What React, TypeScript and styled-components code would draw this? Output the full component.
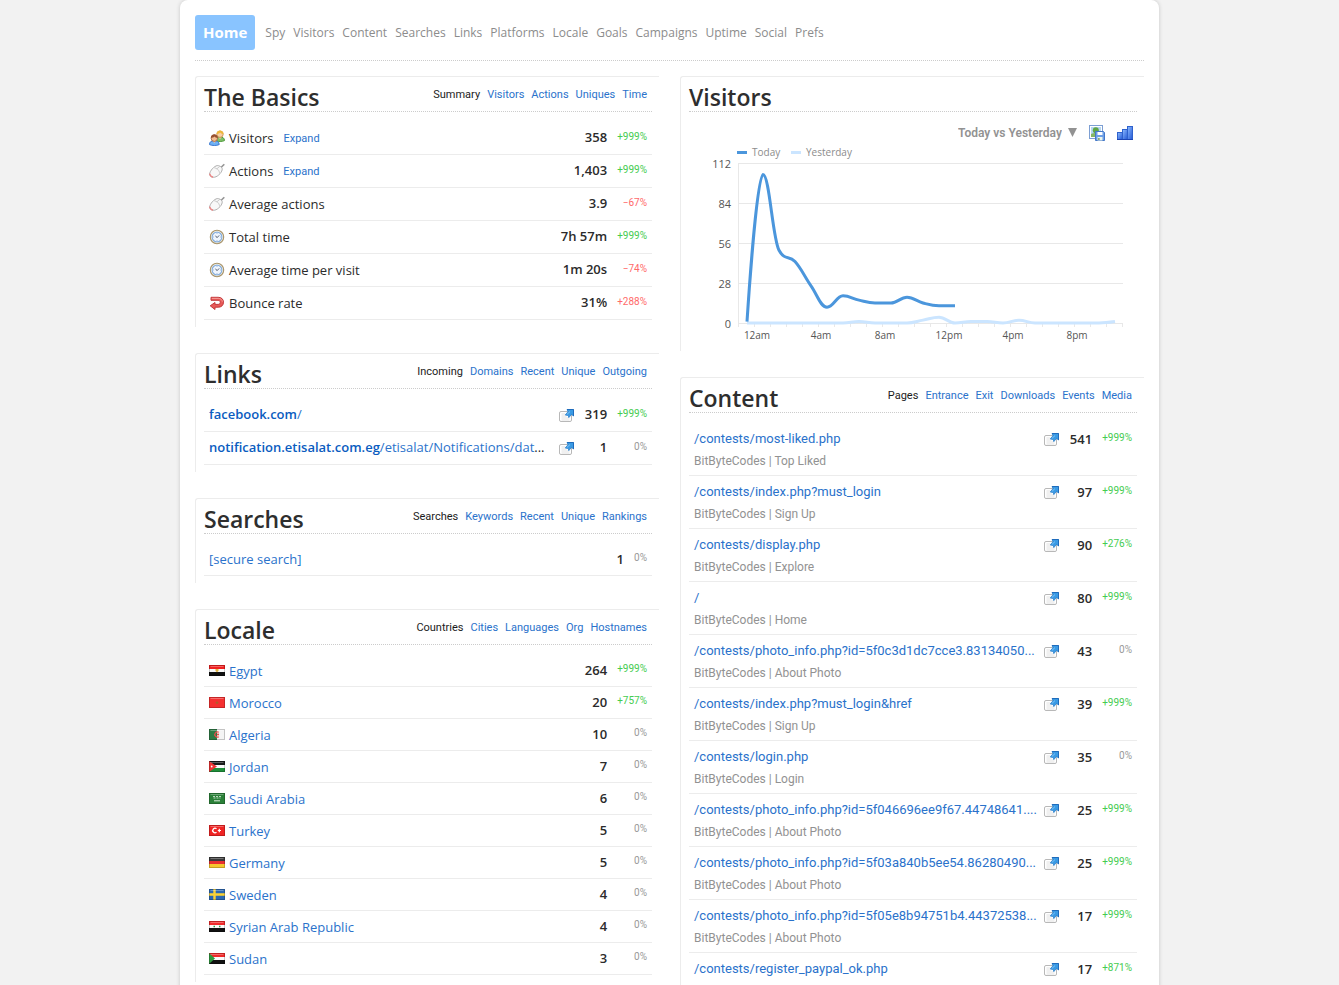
import React from "react";
import styled, { createGlobalStyle } from "styled-components";

const humanist = '"Open Sans", "Noto Sans", sans-serif';
const compact = 'Roboto, "Open Sans", sans-serif';
const linkBlue = "#2a72cb";

const GlobalStyle = createGlobalStyle`
  * { box-sizing: border-box; }
  body {
    margin: 0;
    background: #f2f2f2;
    color: #2b2b2b;
    font-family: ${humanist};
    font-size: 13px;
    line-height: 18px;
  }
  a { color: ${linkBlue}; text-decoration: none; }
  a:hover { text-decoration: underline; }
`;

/* ---------- page frame ---------- */

const Page = styled.div`
  max-width: 979px;
  min-height: 100vh;
  margin: 0 auto;
  padding: 15px 15px 0;
  background: #fff;
  border-radius: 8px 8px 0 0;
  box-shadow: 0 0 4px rgba(0, 0, 0, 0.18);
`;

const Nav = styled.nav`
  display: flex;
  flex-wrap: wrap;
  align-items: center;
  gap: 8px;
  padding-bottom: 10px;
  border-bottom: 1px dotted #ccc;
`;

const NavLink = styled.a`
  color: #8c8c8c;
  font-size: 12px;
`;

const HomeLink = styled.a`
  margin-right: 2px;
  padding: 0 8px;
  border-radius: 3px;
  background: #89c4ff;
  color: #fff;
  font-size: 15px;
  font-weight: 700;
  line-height: 35px;
`;

const Columns = styled.main`
  display: grid;
  grid-template-columns: repeat(auto-fit, minmax(min(440px, 100%), 1fr));
  column-gap: 21px;
  align-items: start;
  padding-top: 15px;
`;

const Column = styled.div`
  display: flex;
  flex-direction: column;
  gap: 26px;
  min-width: 0;
`;

/* ---------- panels ---------- */

const PanelBox = styled.section`
  padding: 0 7px 7px 8px;
  border-top: 1px solid #ececec;
  border-left: 1px solid #ececec;
  border-top-left-radius: 3px;
`;

const PanelHead = styled.header`
  display: flex;
  justify-content: space-between;
  align-items: flex-start;
  height: 35px;
  margin-bottom: 10px;
  border-bottom: 1px dotted #ccc;
`;

const PanelTitle = styled.h2`
  margin: 0;
  color: #2e2e2e;
  font-size: 23px;
  font-weight: 600;
  line-height: 40px;
`;

const Tabs = styled.nav`
  display: flex;
  gap: 7px;
  padding: 9px 5px 0 0;
  font-family: ${compact};
  font-size: 11px;
`;

const Tab = styled.a<{ $current: boolean }>`
  color: ${(p) => (p.$current ? "#1c1c1c" : linkBlue)};
`;

type PanelProps = { title: string; tabs?: string[]; children: React.ReactNode };

function Panel({ title, tabs = [], children }: PanelProps) {
  return (
    <PanelBox aria-label={title}>
      <PanelHead>
        <PanelTitle>{title}</PanelTitle>
        {tabs.length > 0 && (
          <Tabs aria-label={`${title} views`}>
            {tabs.map((t, i) => (
              <Tab key={t} href="#" $current={i === 0}>
                {t}
              </Tab>
            ))}
          </Tabs>
        )}
      </PanelHead>
      {children}
    </PanelBox>
  );
}

/* ---------- data tables ---------- */

const Table = styled.table`
  width: 100%;
  border-collapse: separate;
  border-spacing: 0;
`;

const Row = styled.tr<{ $height: number }>`
  height: ${(p) => p.$height}px;
  & > * { border-bottom: 1px solid #ececec; }
`;

const LabelCell = styled.th`
  width: 100%;
  padding: 0 0 0 5px;
  font-weight: 400;
  text-align: left;
  white-space: nowrap;
`;

const Label = styled.div`
  display: flex;
  align-items: center;
  gap: 4px;
`;

const Expand = styled.a`
  margin-left: 6px;
  padding-top: 2px;
  font-family: ${compact};
  font-size: 11px;
`;

const IconCell = styled.td`
  padding: 2px 0 0;
  line-height: 0;
`;

const ValueCell = styled.td`
  min-width: 33px;
  padding: 0 0 2px;
  font-weight: 600;
  text-align: right;
  white-space: nowrap;
`;

const PercentCell = styled.td<{ $value: string }>`
  padding: 0 5px 3px 10px;
  color: ${(p) => p.$value};
  font-family: ${compact};
  font-size: 10px;
  text-align: right;
  white-space: nowrap;
`;

const Domain = styled.b`
  color: #0a5cc0;
  font-weight: 600;
`;

const ReferrerLabel = styled.div`
  padding-bottom: 2px;
`;

const UrlText = styled.div`
  font-family: ${compact};
`;

const PageRow = styled(Row)`
  vertical-align: top;
  & > * { padding-top: 7px; }
  & > ${IconCell} { padding-top: 9px; }
  & > ${PercentCell} { padding-top: 6px; }
`;

const PageTitle = styled.div`
  margin-top: 4px;
  color: #929292;
  font-family: ${compact};
  font-size: 12px;
`;

const percentColour = (text: string, inverse = false) => {
  if (text === "0%") return "#999";
  return text.startsWith("+") !== inverse ? "#45cc50" : "#ff6a6a";
};

function Percent({ text, inverse }: { text: string; inverse?: boolean }) {
  return <PercentCell $value={percentColour(text, inverse)}>{text}</PercentCell>;
}

/* ---------- icons ---------- */

const Icon16 = styled.svg.attrs({ width: 16, height: 16, viewBox: "0 0 16 16", "aria-hidden": true })`
  flex: none;
`;

const GroupIcon = () => (
  <Icon16>
    <path d="M6.500 10.500c0-2.600 1.500-3.500 4.200-3.500 3 0 4.800 1 4.800 3.600-2.500 1.200-6 1.200-9-.1z" fill="#7fc169" stroke="#4f9a3c" />
    <path d="M9.500 7.300l1.500 2 1.500-2z" fill="#f6c99f" />
    <circle cx="11" cy="4.200" r="3.200" fill="#f8cfa4" stroke="#c08a3c" strokeWidth=".8" />
    <path d="M7.600 4c0-2.400 1.500-3.600 3.400-3.600s3.500 1.200 3.500 3.600c-1.800-.2-2.800-.8-3.400-1.600-.8 1-2 1.400-3.500 1.600z" fill="#eeb73a" />
    <path d="M.5 14.600c0-2.800 1.700-3.800 4.700-3.800s5 1 5 3.800c-2.700 1.200-7 1.200-9.700 0z" fill="#6fb1f5" stroke="#3a78cf" />
    <path d="M3.800 11l1.500 2 1.500-2z" fill="#f6c99f" />
    <circle cx="5.300" cy="8.200" r="3.200" fill="#f3bd92" stroke="#9a5a38" strokeWidth=".8" />
    <path d="M1.900 8c0-2.400 1.500-3.700 3.400-3.700s3.500 1.300 3.500 3.700c-1.700-.2-2.800-.7-3.400-1.500-.8 1-2 1.300-3.500 1.500z" fill="#97502f" />
  </Icon16>
);

const MouseIcon = () => (
  <Icon16>
    <path d="M11.500 5l3.800-3.800" stroke="#949494" strokeWidth="1.600" />
    <path d="M.6 11.200C.8 7.800 5.200 3 8.200 2.600c1.800-.2 4.600 1.200 5 3 .4 3-3.800 7.800-7.600 8.600C3 14.500.6 13.500.6 11.200z" fill="#f8f8f8" stroke="#a6a6a6" strokeWidth=".9" />
    <path d="M5.300 4.800c2.700.3 4.700 2.100 5.300 5M7.600 6l3.200-2.600" fill="none" stroke="#c0c0c0" strokeWidth=".8" />
    <path d="M.8 10.800c.5 1.600 1.600 2.700 3.200 3.300-1.900.1-3.200-1-3.200-3.300z" fill="#f58a8a" stroke="#ee8585" />
  </Icon16>
);

const ClockIcon = () => (
  <Icon16>
    <circle cx="8" cy="8" r="6.700" fill="#fdf7e6" stroke="#a8946c" strokeWidth="1.100" />
    <circle cx="8" cy="8" r="4.900" fill="#eff5fd" stroke="#86aedd" strokeWidth="1.200" />
    <path d="M8 4v.8M8 11.200v.8M4 8h.8M11.200 8h.8" stroke="#9ab4d6" />
    <path d="M6.500 6.700L8 8.700l2.200-2.300" fill="none" stroke="#5a6478" />
  </Icon16>
);

const BounceIcon = () => (
  <Icon16>
    <path
      d="M2 2.300h7.200c3.200 0 5.300 2 5.300 4.900 0 3-2.100 5-5.300 5H6v2.300L1.200 10.800 6 7.500v1.900h3c1.300 0 2.300-.8 2.300-2.100 0-1.200-1-2-2.300-2H2z"
      fill="#e85a58"
      stroke="#c23a3c"
    />
    <path d="M2.800 3.400h6.400c2.500 0 4 1.300 4.200 3.300" fill="none" stroke="#f79c98" />
  </Icon16>
);

const GoIcon = () => (
  <Icon16>
    <rect x="1.500" y="3.500" width="12" height="10" rx="1.500" fill="#fff" stroke="#b8b8b8" />
    <path d="M3.500 6h4M3.500 8h5M3.500 10h8M3.500 12h8" stroke="#dedede" strokeWidth=".9" />
    <path d="M9 1.500h6.500V8l-2-1.600-2.700 3.200-.5-2.100-3-.5 2.700-3.300z" fill="#3a9ae4" stroke="#2a7fcc" strokeWidth=".8" />
    <path d="M9 1.500h6.500V8" fill="none" stroke="#1f6cbc" />
    <path d="M8.800 6.500L12 3.600" stroke="#7cc4f6" />
  </Icon16>
);

const SaveImageIcon = () => (
  <Icon16>
    <rect x=".5" y=".5" width="13" height="13" fill="#fff" stroke="#7d9fd3" />
    <rect x="2" y="2" width="10" height="10" fill="#b6d7f1" />
    <path d="M2 9c2.500-1.500 6-1.300 10 0v3H2z" fill="#86b765" />
    <circle cx="6.800" cy="5.200" r="3" fill="#5fa645" />
    <path d="M6.300 7h1.200v2.500H6.300z" fill="#6d5a38" />
    <path d="M6.500 6.500h8l1 1v8h-9z" fill="#6d9fe6" stroke="#4478c8" />
    <path d="M8.500 7h5v3h-5z" fill="#fff" />
    <path d="M8.500 12h5v3.500h-5z" fill="#edf5ea" />
    <path d="M9.300 13h1.200v2H9.300z" fill="#5a8a4a" />
  </Icon16>
);

const BarsIcon = () => (
  <Icon16>
    <defs>
      <linearGradient id="bar-fill" x1="0" y1="0" x2="1" y2="1">
        <stop offset="0" stopColor="#8ebcff" />
        <stop offset="1" stopColor="#2257d4" />
      </linearGradient>
    </defs>
    <g fill="url(#bar-fill)" stroke="#2f62cd">
      <rect x=".5" y="7.500" width="5" height="7" />
      <rect x="5.500" y="4.500" width="5" height="10" />
      <rect x="10.500" y="1.500" width="5" height="13" />
    </g>
    <path d="M0 14.500h16" stroke="#1c45b5" />
  </Icon16>
);

/* ---------- flags ---------- */

const FlagSvg = styled.svg.attrs({ width: 16, height: 11, viewBox: "0 0 16 11", "aria-hidden": true })`
  flex: none;
`;

const stripes = (top: string, middle: string, bottom: string) => (
  <>
    <path d="M0 0h16v4H0z" fill={top} />
    <path d="M0 4h16v3H0z" fill={middle} />
    <path d="M0 7h16v4H0z" fill={bottom} />
  </>
);

const flags: Record<string, React.ReactNode> = {
  Egypt: (
    <>
      {stripes("#f02020", "#fafafa", "#111")}
      <path d="M6.500 4h3v2L8 7.200 6.500 6z" fill="#e2b544" />
    </>
  ),
  Morocco: (
    <>
      <path d="M0 0h16v11H0z" fill="#f53030" />
      <path d="M8 3.500l1.300 3.700L6 5h4L6.700 7.200z" fill="#a8642a" />
    </>
  ),
  Algeria: (
    <>
      <path d="M0 0h8v11H0z" fill="#2d7b45" />
      <path d="M8 0h8v11H8z" fill="#f4f4f4" />
      <path d="M9.800 3.300a2.600 2.600 0 1 0 0 4.400" fill="none" stroke="#ee4b4b" strokeWidth="1.200" />
      <circle cx="9" cy="5.500" r="1.100" fill="#ee4b4b" />
    </>
  ),
  Jordan: (
    <>
      {stripes("#1a1a1a", "#fafafa", "#1f8f3a")}
      <path d="M0 0l8 5.500L0 11z" fill="#ee3333" />
      <circle cx="2.700" cy="5.500" r=".9" fill="#fff" />
    </>
  ),
  "Saudi Arabia": (
    <>
      <path d="M0 0h16v11H0z" fill="#2a8038" />
      <path d="M4 3.500h8M4.500 5h7" stroke="#b8d8bc" strokeWidth="1" strokeDasharray="2 1" />
      <path d="M5 7.800h6" stroke="#dcecdc" />
    </>
  ),
  Turkey: (
    <>
      <path d="M0 0h16v11H0z" fill="#f02424" />
      <path d="M7.500 3.700a2.300 2.300 0 1 0 0 3.600" fill="none" stroke="#fff" strokeWidth="1.300" />
      <path d="M10.300 3.800v3.400M8.800 5.500h3.200" stroke="#fff" strokeWidth="1.200" />
    </>
  ),
  Germany: stripes("#3a3a3a", "#e83030", "#f6c72e"),
  Sweden: (
    <>
      <path d="M0 0h16v11H0z" fill="#2c68b2" />
      <path d="M5.500 0v11M0 5.500h16" stroke="#fbd234" strokeWidth="2.400" />
    </>
  ),
  "Syrian Arab Republic": (
    <>
      {stripes("#f02a2a", "#fafafa", "#111")}
      <path d="M4.500 5.500h1.500M10 5.500h1.500" stroke="#2f9a45" strokeWidth="1.500" />
    </>
  ),
  Sudan: (
    <>
      {stripes("#f02a2a", "#fafafa", "#111")}
      <path d="M0 0l6 5.500L0 11z" fill="#2f9a3f" />
    </>
  ),
};

const Flag = ({ country }: { country: string }) => (
  <FlagSvg>
    {flags[country]}
    <path d="M1.500 1.500h13" stroke="#fff" strokeOpacity=".3" />
    <rect x=".5" y=".5" width="15" height="10" fill="none" stroke="#000" strokeOpacity=".2" />
  </FlagSvg>
);

/* ---------- chart ---------- */

const ChartTools = styled.div`
  display: flex;
  justify-content: flex-end;
  align-items: center;
  gap: 12px;
  height: 21px;
  padding-right: 4px;
`;

const RangePicker = styled.label`
  display: flex;
  align-items: center;
  gap: 6px;
  color: #929292;
`;

const RangeSelect = styled.select`
  appearance: none;
  padding: 0;
  border: 0;
  background: none;
  color: inherit;
  font-family: ${compact};
  font-size: 12px;
  font-weight: 600;
`;

const ToolButton = styled.button`
  padding: 0;
  border: 0;
  background: none;
  line-height: 0;
  cursor: pointer;
`;

const ChartSvg = styled.svg`
  display: block;
  width: 100%;
  height: auto;
  font-family: ${humanist};
`;

const today = [1, 104, 51, 43, 26, 11, 19, 16, 14, 14, 18, 14, 12, 12];
const yesterday = [0, 0, 0, 0, 0, 0, 0, 1, 0, 0, 0, 2, 4, 0, 1, 1, 0, 2, 0, 0, 0, 0, 0, 1];
const plot = { left: 50, top: 21, width: 384, height: 160, max: 112 };
const step = plot.width / 24;
const px = (i: number) => plot.left + step / 2 + i * step;
const py = (v: number) => plot.top + plot.height * (1 - v / plot.max);

/* Spline through the points whose control points never overshoot a neighbour. */
function spline(values: number[]) {
  const pts = values.map((v, i) => ({ x: px(i), y: py(v) - 1 }));
  let out = `M${pts[0].x} ${pts[0].y}`;
  let prev = pts[0];
  for (let i = 1; i < pts.length; i++) {
    const last = pts[i - 1];
    const p = pts[i];
    const next = pts[i + 1];
    let left = p;
    let right = p;
    if (next) {
      const lx = (1.5 * p.x + last.x) / 2.5;
      let ly = (1.5 * p.y + last.y) / 2.5;
      const rx = (1.5 * p.x + next.x) / 2.5;
      let ry = (1.5 * p.y + next.y) / 2.5;
      const shift = ((ry - ly) * (rx - p.x)) / (rx - lx) + p.y - ry;
      ly += shift;
      ry += shift;
      const hiL = Math.max(last.y, p.y);
      const loL = Math.min(last.y, p.y);
      if (ly > hiL) { ly = hiL; ry = 2 * p.y - ly; }
      else if (ly < loL) { ly = loL; ry = 2 * p.y - ly; }
      const hiR = Math.max(next.y, p.y);
      const loR = Math.min(next.y, p.y);
      if (ry > hiR) { ry = hiR; ly = 2 * p.y - ry; }
      else if (ry < loR) { ry = loR; ly = 2 * p.y - ry; }
      left = { x: lx, y: ly };
      right = { x: rx, y: ry };
    }
    out += `C${prev.x} ${prev.y} ${left.x} ${left.y} ${p.x} ${p.y}`;
    prev = right;
  }
  return out;
}

function VisitorsChart() {
  return (
    <ChartSvg viewBox="0 0 448 201" role="img" aria-label="Visitors per hour, today and yesterday">
      <g stroke="#e8e8e8">
        {[0, 28, 56, 84, 112].map((v) => (
          <path key={v} d={`M${plot.left} ${py(v) - 0.5}h${plot.width}`} />
        ))}
        <path d={`M${plot.left - 0.5} ${plot.top - 1}v${plot.height + 4}`} />
        {Array.from({ length: 24 }, (_, i) => (
          <path key={i} d={`M${plot.left + (i + 1) * step - 0.5} ${plot.top + plot.height}v3`} />
        ))}
      </g>
      <path d={spline(yesterday)} fill="none" stroke="#cbe5ff" strokeWidth="3" />
      <path d={spline(today)} fill="none" stroke="#4b96dc" strokeWidth="3" strokeLinejoin="round" />
      <g fill="#555" fontSize="11" textAnchor="end">
        {[0, 28, 56, 84, 112].map((v) => (
          <text key={v} x="42" y={py(v) + 4}>{v}</text>
        ))}
      </g>
      <g fill="#555" fontSize="10" textAnchor="middle">
        {["12am", "4am", "8am", "12pm", "4pm", "8pm"].map((t, i) => (
          <text key={t} x={px(i * 4) + 10} y="196">{t}</text>
        ))}
      </g>
      <g fill="#8c8c8c" fontSize="10">
        <path d="M48 9.500h10" stroke="#4b96dc" strokeWidth="3" />
        <text x="63" y="13">Today</text>
        <path d="M102 9.500h10" stroke="#cbe5ff" strokeWidth="3" />
        <text x="117" y="13">Yesterday</text>
      </g>
    </ChartSvg>
  );
}

/* ---------- data ---------- */

const navItems = ["Spy", "Visitors", "Content", "Searches", "Links", "Platforms", "Locale", "Goals", "Campaigns", "Uptime", "Social", "Prefs"];

const basics = [
  { icon: <GroupIcon />, label: "Visitors", expand: true, value: "358", change: "+999%" },
  { icon: <MouseIcon />, label: "Actions", expand: true, value: "1,403", change: "+999%" },
  { icon: <MouseIcon />, label: "Average actions", value: "3.9", change: "−67%" },
  { icon: <ClockIcon />, label: "Total time", value: "7h 57m", change: "+999%" },
  { icon: <ClockIcon />, label: "Average time per visit", value: "1m 20s", change: "−74%" },
  { icon: <BounceIcon />, label: "Bounce rate", value: "31%", change: "+288%", inverse: true },
];

const links = [
  { domain: "facebook.com", path: "/", more: "", value: "319", change: "+999%" },
  { domain: "notification.etisalat.com.eg", path: "/etisalat/Notifications/dat", more: "...", value: "1", change: "0%" },
];

const countries = [
  ["Egypt", "264", "+999%"],
  ["Morocco", "20", "+757%"],
  ["Algeria", "10", "0%"],
  ["Jordan", "7", "0%"],
  ["Saudi Arabia", "6", "0%"],
  ["Turkey", "5", "0%"],
  ["Germany", "5", "0%"],
  ["Sweden", "4", "0%"],
  ["Syrian Arab Republic", "4", "0%"],
  ["Sudan", "3", "0%"],
];

const pages = [
  ["/contests/most-liked.php", "Top Liked", "541", "+999%"],
  ["/contests/index.php?must_login", "Sign Up", "97", "+999%"],
  ["/contests/display.php", "Explore", "90", "+276%"],
  ["/", "Home", "80", "+999%"],
  ["/contests/photo_info.php?id=5f0c3d1dc7cce3.83134050...", "About Photo", "43", "0%"],
  ["/contests/index.php?must_login&href", "Sign Up", "39", "+999%"],
  ["/contests/login.php", "Login", "35", "0%"],
  ["/contests/photo_info.php?id=5f046696ee9f67.44748641....", "About Photo", "25", "+999%"],
  ["/contests/photo_info.php?id=5f03a840b5ee54.86280490...", "About Photo", "25", "+999%"],
  ["/contests/photo_info.php?id=5f05e8b94751b4.44372538...", "About Photo", "17", "+999%"],
  ["/contests/register_paypal_ok.php", "", "17", "+871%"],
];

export default function App() {
  return (
    <>
      <GlobalStyle />
      <Page>
        <Nav aria-label="Main">
          <HomeLink href="#" aria-current="page">Home</HomeLink>
          {navItems.map((n) => (
            <NavLink key={n} href="#">{n}</NavLink>
          ))}
        </Nav>
        <Columns>
          <Column>
            <Panel title="The Basics" tabs={["Summary", "Visitors", "Actions", "Uniques", "Time"]}>
              <Table>
                <tbody>
                  {basics.map((b) => (
                    <Row key={b.label} $height={33}>
                      <LabelCell scope="row">
                        <Label>
                          {b.icon}
                          {b.label}
                          {b.expand && <Expand href="#">Expand</Expand>}
                        </Label>
                      </LabelCell>
                      <ValueCell>{b.value}</ValueCell>
                      <Percent text={b.change} inverse={b.inverse} />
                    </Row>
                  ))}
                </tbody>
              </Table>
            </Panel>

            <Panel title="Links" tabs={["Incoming", "Domains", "Recent", "Unique", "Outgoing"]}>
              <Table>
                <tbody>
                  {links.map((l) => (
                    <Row key={l.domain} $height={33}>
                      <LabelCell scope="row">
                        <ReferrerLabel>
                          <a href="#"><Domain>{l.domain}</Domain>{l.path}</a>
                          {l.more}
                        </ReferrerLabel>
                      </LabelCell>
                      <IconCell><GoIcon /></IconCell>
                      <ValueCell>{l.value}</ValueCell>
                      <Percent text={l.change} />
                    </Row>
                  ))}
                </tbody>
              </Table>
            </Panel>

            <Panel title="Searches" tabs={["Searches", "Keywords", "Recent", "Unique", "Rankings"]}>
              <Table>
                <tbody>
                  <Row $height={32}>
                    <LabelCell scope="row">
                      <ReferrerLabel><a href="#">[secure search]</a></ReferrerLabel>
                    </LabelCell>
                    <ValueCell>1</ValueCell>
                    <Percent text="0%" />
                  </Row>
                </tbody>
              </Table>
            </Panel>

            <Panel title="Locale" tabs={["Countries", "Cities", "Languages", "Org", "Hostnames"]}>
              <Table>
                <tbody>
                  {countries.map(([name, value, change]) => (
                    <Row key={name} $height={32}>
                      <LabelCell scope="row">
                        <Label><Flag country={name} /><a href="#">{name}</a></Label>
                      </LabelCell>
                      <ValueCell>{value}</ValueCell>
                      <Percent text={change} />
                    </Row>
                  ))}
                </tbody>
              </Table>
            </Panel>
          </Column>

          <Column>
            <Panel title="Visitors">
              <ChartTools>
                <RangePicker>
                  <RangeSelect aria-label="Date range">
                    <option>Today vs Yesterday</option>
                  </RangeSelect>
                  <svg width="9" height="9" viewBox="0 0 9 9" aria-hidden="true">
                    <path d="M0 0h9L4.500 9z" fill="currentColor" />
                  </svg>
                </RangePicker>
                <ToolButton type="button" aria-label="Save chart as image"><SaveImageIcon /></ToolButton>
                <ToolButton type="button" aria-label="Show as bar chart"><BarsIcon /></ToolButton>
              </ChartTools>
              <VisitorsChart />
            </Panel>

            <Panel title="Content" tabs={["Pages", "Entrance", "Exit", "Downloads", "Events", "Media"]}>
              <Table>
                <tbody>
                  {pages.map(([url, title, value, change]) => (
                    <PageRow key={url} $height={53}>
                      <LabelCell scope="row">
                        <UrlText><a href="#">{url}</a></UrlText>
                        {title && <PageTitle>BitByteCodes | {title}</PageTitle>}
                      </LabelCell>
                      <IconCell><GoIcon /></IconCell>
                      <ValueCell>{value}</ValueCell>
                      <Percent text={change} />
                    </PageRow>
                  ))}
                </tbody>
              </Table>
            </Panel>
          </Column>
        </Columns>
      </Page>
    </>
  );
}
